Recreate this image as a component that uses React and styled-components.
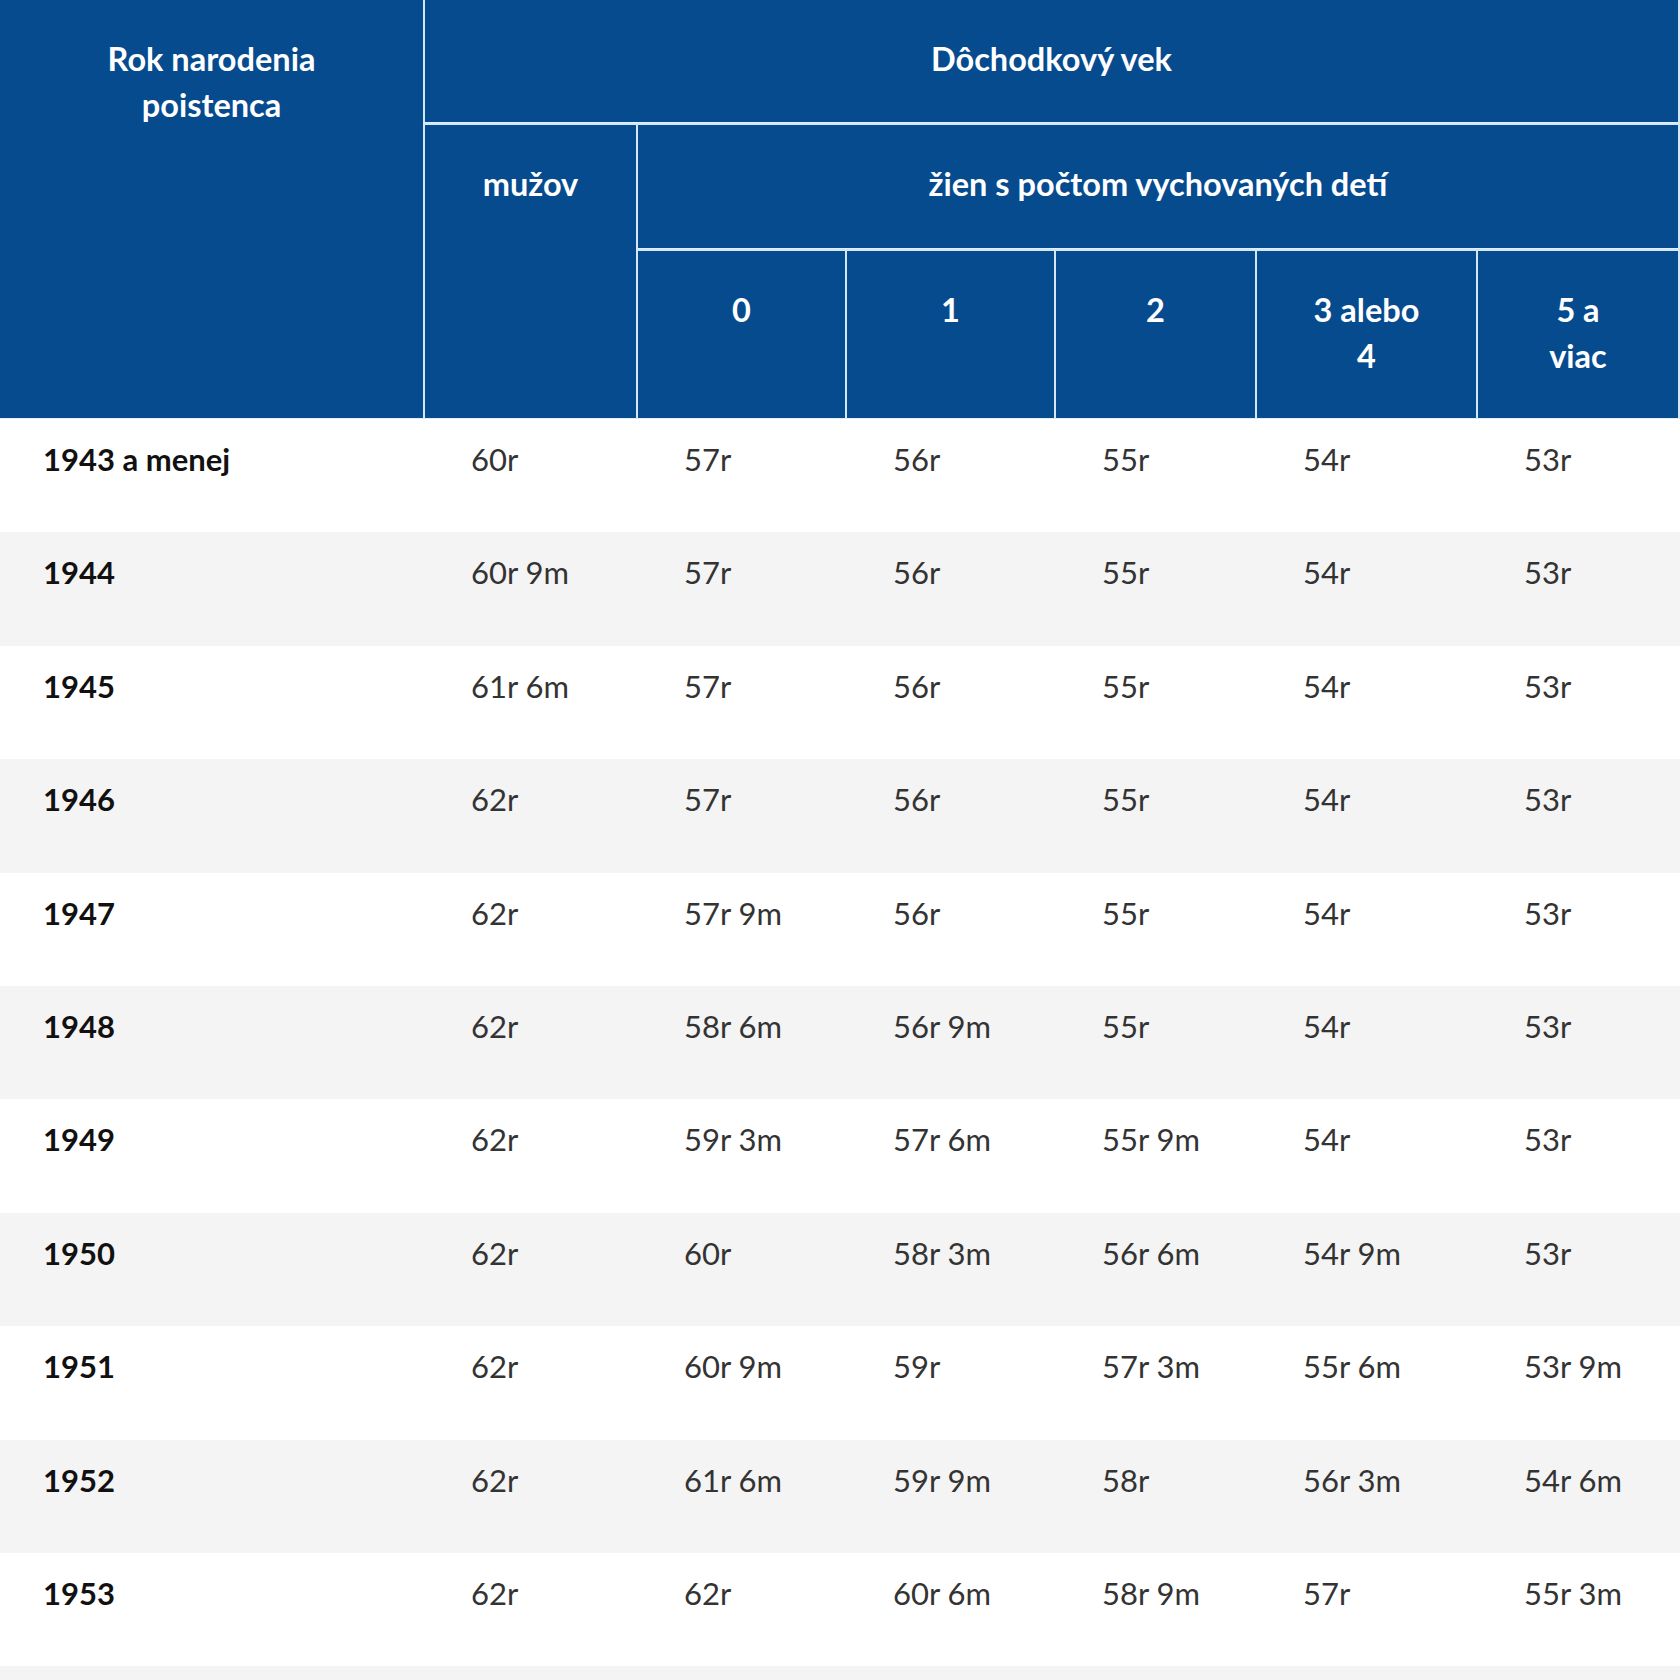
import React from "react";
import styled, { createGlobalStyle } from "styled-components";

const GlobalStyle = createGlobalStyle`
  html, body {
    margin: 0;
    padding: 0;
    background: #ffffff;
  }
  body {
    font-family: Lato, "Noto Sans", sans-serif;
  }
`;

const TableWrap = styled.div`
  width: 1680px;
  height: 1680px;
  overflow: hidden;
`;

const Table = styled.table`
  width: 1680px;
  table-layout: fixed;
  border-collapse: separate;
  border-spacing: 0;
`;

const HeadRow = styled.tr`
  height: ${(p) => p.$h}px;
`;

const HeadCell = styled.th`
  background-color: #074b8f;
  color: #ffffff;
  font-size: 32.5px;
  font-weight: 700;
  line-height: 46px;
  text-align: center;
  vertical-align: top;
  padding: 36px 10px 0;
  border-left: ${(p) => (p.$first ? "0" : "2px solid #d2e8f6")};
  border-top: ${(p) => (p.$top ? "2px solid #d2e8f6" : "0")};
  border-right: ${(p) => (p.$last ? "2px solid #d2e8f6" : "0")};
  border-bottom: 1px solid #e3eef6;
`;

const Row = styled.tr`
  background-color: ${(p) => (p.$odd ? "#f4f4f4" : "#ffffff")};
  height: 113.4px;
`;

const Cell = styled.td`
  vertical-align: top;
  padding: 17px 0 0 48px;
  font-size: 31px;
  line-height: 46px;
  color: #333333;
  font-weight: 400;
  white-space: nowrap;
`;

const YearCell = styled(Cell)`
  padding-left: 43px;
  color: #111111;
  font-weight: 700;
`;

const rows = [
  ["1943 a menej", "60r", "57r", "56r", "55r", "54r", "53r"],
  ["1944", "60r 9m", "57r", "56r", "55r", "54r", "53r"],
  ["1945", "61r 6m", "57r", "56r", "55r", "54r", "53r"],
  ["1946", "62r", "57r", "56r", "55r", "54r", "53r"],
  ["1947", "62r", "57r 9m", "56r", "55r", "54r", "53r"],
  ["1948", "62r", "58r 6m", "56r 9m", "55r", "54r", "53r"],
  ["1949", "62r", "59r 3m", "57r 6m", "55r 9m", "54r", "53r"],
  ["1950", "62r", "60r", "58r 3m", "56r 6m", "54r 9m", "53r"],
  ["1951", "62r", "60r 9m", "59r", "57r 3m", "55r 6m", "53r 9m"],
  ["1952", "62r", "61r 6m", "59r 9m", "58r", "56r 3m", "54r 6m"],
  ["1953", "62r", "62r", "60r 6m", "58r 9m", "57r", "55r 3m"],
];

const colWidths = [423, 213, 209, 209, 201, 221, 204];

export default function App() {
  return (
    <>
      <GlobalStyle />
      <TableWrap>
        <Table>
          <colgroup>
            {colWidths.map((w, i) => (
              <col key={i} style={{ width: w }} />
            ))}
          </colgroup>
          <thead>
            <HeadRow $h={123}>
              <HeadCell rowSpan={3} $first>
                Rok narodenia
                <br />
                poistenca
              </HeadCell>
              <HeadCell colSpan={6} $last>
                Dôchodkový vek
              </HeadCell>
            </HeadRow>
            <HeadRow $h={126}>
              <HeadCell rowSpan={2} $top>
                mužov
              </HeadCell>
              <HeadCell colSpan={5} $top $last>
                žien s počtom vychovaných detí
              </HeadCell>
            </HeadRow>
            <HeadRow $h={170}>
              <HeadCell $top>0</HeadCell>
              <HeadCell $top>1</HeadCell>
              <HeadCell $top>2</HeadCell>
              <HeadCell $top>
                3 alebo
                <br />4
              </HeadCell>
              <HeadCell $top $last>
                5 a
                <br />
                viac
              </HeadCell>
            </HeadRow>
          </thead>
          <tbody>
            {rows.map((r, i) => (
              <Row key={r[0]} $odd={i % 2 === 1}>
                <YearCell>{r[0]}</YearCell>
                {r.slice(1).map((v, j) => (
                  <Cell key={j}>{v}</Cell>
                ))}
              </Row>
            ))}
            {/* next row continues below the fold */}
            <Row $odd>
              <td colSpan={7} />
            </Row>
          </tbody>
        </Table>
      </TableWrap>
    </>
  );
}
